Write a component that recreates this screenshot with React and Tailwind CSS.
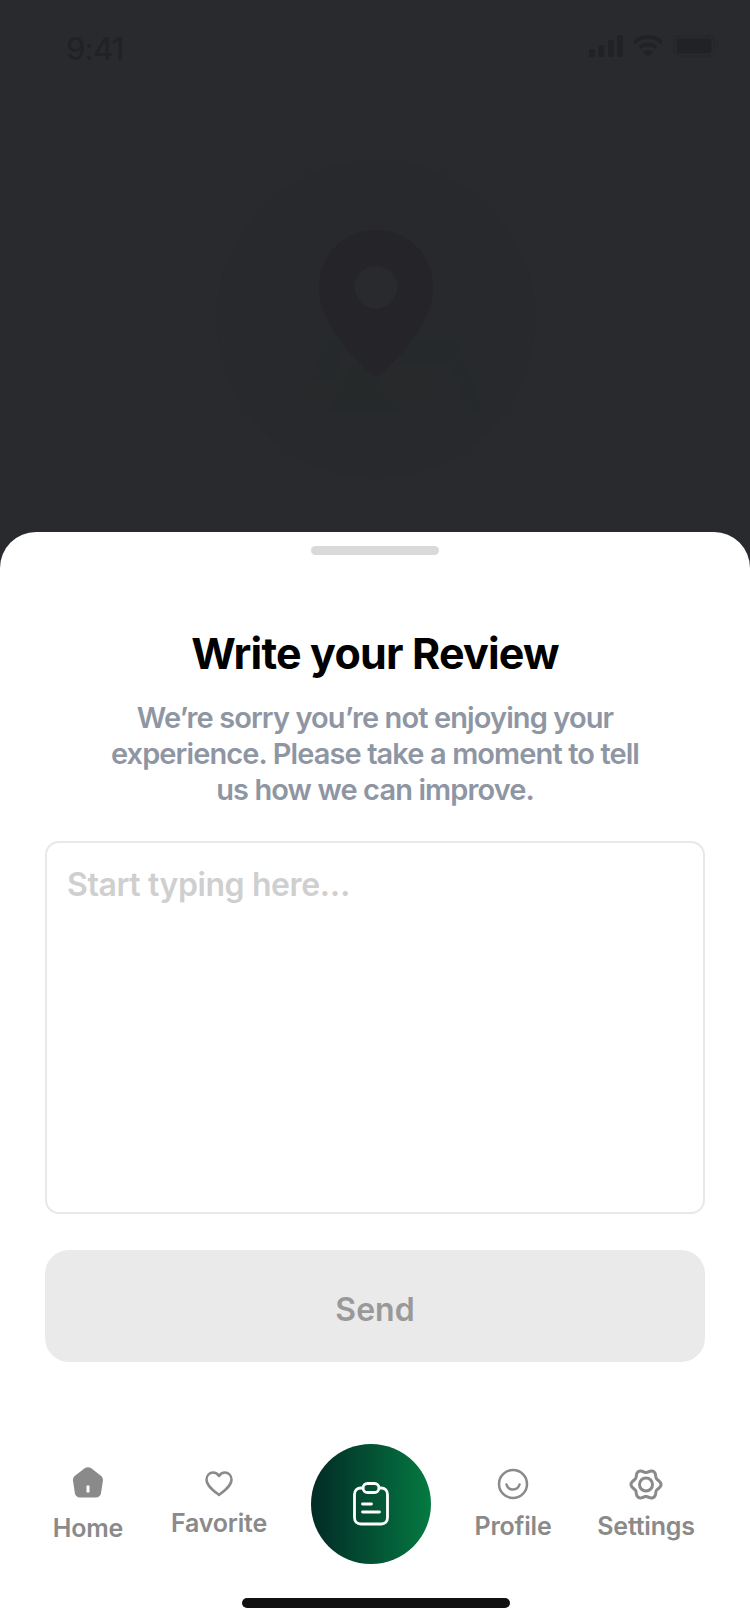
const sans = "font-['Inter','Noto_Sans',sans-serif]";

// gear outline: six soft lobes around the centre
const gearPath =
  Array.from({ length: 120 }, (_, i) => {
    const a = (i / 120) * Math.PI * 2;
    const r = 13.5 + 1.5 * Math.cos(6 * a);
    return `${i === 0 ? 'M' : 'L'}${(17 + r * Math.cos(a)).toFixed(2)} ${(16.5 + r * Math.sin(a)).toFixed(2)}`;
  }).join(' ') + ' Z';

function StatusBar() {
  return (
    <div className="flex items-start justify-between pl-[66px] pr-[31px] pt-[30px]">
      <span className={`${sans} text-[31px] leading-[38px] font-medium tracking-[-1px] text-[#212225]`}>9:41</span>
      <div className="flex items-center gap-[10px] pt-[5px]">
        <svg width="34" height="22" viewBox="0 0 34 22" fill="#212225">
          <rect x="0" y="14" width="6" height="8" rx="2" />
          <rect x="9.5" y="10" width="6" height="12" rx="2" />
          <rect x="19" y="5" width="6" height="17" rx="2" />
          <rect x="28" y="0" width="6" height="22" rx="2" />
        </svg>
        <svg width="30" height="22" viewBox="0 0 30 22" fill="#212225">
          <path d="M15 0C9.2 0 4 2.3 0 6l2.6 3C5.9 5.900 10.200 4 15 4s9.100 1.900 12.400 5L30 6C26 2.300 20.800 0 15 0z" />
          <path d="M15 7.500c-3.600 0-6.900 1.400-9.400 3.700l2.700 3c1.800-1.600 4.100-2.600 6.700-2.600s4.900 1 6.700 2.600l2.700-3C21.900 8.900 18.600 7.500 15 7.500z" />
          <path d="M15 15c-1.900 0-3.500.7-4.800 1.800L15 22l4.800-5.200C18.500 15.700 16.900 15 15 15z" />
        </svg>
        <svg width="46" height="22" viewBox="0 0 46 22" fill="none">
          <rect x="1" y="1" width="40" height="20" rx="5" stroke="#26272a" strokeWidth="2" />
          <rect x="3.500" y="3.500" width="35" height="15" rx="3" fill="#212225" />
          <rect x="43" y="8" width="2.500" height="6" rx="1" fill="#27282b" />
        </svg>
      </div>
    </div>
  );
}

function MapIllustration() {
  return (
    <svg width="318" height="318" viewBox="0 0 318 318" fill="none" className="mx-auto mt-[92px] translate-x-[1px]">
      <circle cx="159" cy="159" r="159" fill="#28292c" />
      <path d="M107 182 L82 250 L112 250 L135 182 Z" fill="#28292a" />
      <path d="M107 182 L94 218 L118 218 L127 182 Z" fill="#26292b" />
      <path d="M135 200 L112 250 L185 250 L159 218 Z" fill="#25292a" />
      <path d="M159 218 L185 250 L228 250 L212 190 L190 190 Z" fill="#28292a" />
      <path d="M190 182 L234 182 Q240 182 243 190 L248 205 L180 205 Z" fill="#26292b" />
      <path d="M234 182 Q240 182 243 190 L265 250 L250 250 L228 182 Z" fill="#25292c" />
      <path
        d="M159 70C127 70 102 95 102 127C102 165 140 203 159 218C178 203 216 165 216 127C216 95 191 70 159 70Z"
        fill="#252428"
      />
      <circle cx="159" cy="127" r="21.500" fill="#292a2d" />
    </svg>
  );
}

function HomeIcon() {
  return (
    <svg width="32" height="31" viewBox="0 0 32 31" fill="#8a8a8a">
      <path
        fillRule="evenodd"
        d="M12.700 1.300c1.900-1.500 4.700-1.500 6.600 0l9.600 7.400c1.500 1.200 2.300 3.100 2 5l-1.900 12.500c-.4 2.400-2.500 4.300-5 4.300H7.900c-2.500 0-4.600-1.900-5-4.300L1 13.700c-.3-1.900.5-3.800 2-5L12.700 1.300zM14.500 18.500v7h3v-7h-3z"
      />
    </svg>
  );
}

function HeartIcon() {
  return (
    <svg width="28" height="26" viewBox="0 0 28 26" fill="none" stroke="#8a8a8a" strokeWidth="2.500" strokeLinejoin="round">
      <path d="M14 24C9 20 1.500 15 1.500 8.500C1.500 4.500 4.500 1.500 8 1.500C10.500 1.500 12.700 2.800 14 5C15.300 2.800 17.500 1.500 20 1.500C23.500 1.500 26.500 4.500 26.500 8.500C26.500 15 19 20 14 24Z" />
    </svg>
  );
}

function SmileIcon() {
  return (
    <svg width="32" height="32" viewBox="0 0 32 32" fill="none" stroke="#8a8a8a" strokeWidth="2.500" strokeLinecap="round">
      <circle cx="16" cy="16" r="14" />
      <path d="M9.500 16.500C10.500 20 13 21.500 16 21.500C19 21.500 21.500 20 22.500 16.500" />
    </svg>
  );
}

function GearIcon() {
  return (
    <svg width="34" height="33" viewBox="0 0 34 33" fill="none" stroke="#8a8a8a" strokeWidth="3" strokeLinejoin="round">
      <path d={gearPath} />
      <circle cx="17" cy="16.500" r="6.500" />
    </svg>
  );
}

function ClipboardIcon() {
  return (
    <svg width="36" height="44" viewBox="0 0 36 44" fill="none" stroke="#fff" strokeWidth="2.800" strokeLinecap="round">
      <path d="M10 6H8C4 6 1.500 8.500 1.500 12.500V35.500C1.500 39.500 4 42 8 42H28C32 42 34.500 39.500 34.500 35.500V12.500C34.500 8.500 32 6 28 6H26" />
      <rect x="10" y="1.500" width="16" height="9" rx="4.500" />
      <path d="M9.500 22H18.500" />
      <path d="M9.500 30H26.500" />
    </svg>
  );
}

function NavItem({ icon, label, className }) {
  return (
    <div className={`flex flex-col items-center ${className}`}>
      <div className="h-[36px] flex items-center justify-center">{icon}</div>
      <span className="font-['Inter',sans-serif] text-[25px] leading-[30px] font-semibold tracking-[-0.2px] text-[#8a8a8a] whitespace-nowrap">{label}</span>
    </div>
  );
}

export default function App() {
  return (
    <div className="w-[750px] h-[1624px] flex flex-col bg-[#292a2d] overflow-hidden">
      <div className="h-[532px] flex-none">
        <StatusBar />
        <MapIllustration />
      </div>

      <div className="flex-1 flex flex-col items-center bg-white rounded-t-[36px] relative">
        <div className="w-[128px] h-[9px] mt-[14px] rounded-full bg-[#d9d9d9]" />
        <h1 className={`${sans} mt-[71px] text-[43px] leading-[54px] font-bold tracking-[-0.8px] text-black`}>Write your Review</h1>
        <p className={`${sans} mt-[20px] text-[29px] leading-[36px] font-semibold tracking-[-0.9px] text-[#8f96a3] text-center`}>
          We’re sorry you’re not enjoying your<br />
          experience. Please take a moment to tell<br />
          us how we can improve.
        </p>
        <div className={`${sans} w-[660px] h-[373px] mt-[33px] border-2 border-[#e8e8e8] rounded-[14px] px-[20px] pt-[22px] text-[32px] leading-[40px] font-semibold tracking-[-0.4px] text-[#cfcfcf]`}>
          Start typing here…
        </div>
        <button className="w-[660px] h-[112px] mt-[36px] pt-[8px] rounded-[24px] bg-[#eaeaea] font-['Inter',sans-serif] text-[32px] font-semibold text-[#999999]">
          Send
        </button>

        <div className="w-full h-[120px] mt-[82px] flex items-start">
          <NavItem icon={<HomeIcon />} label="Home" className="w-[70px] ml-[53px] mt-[20px] gap-[13px]" />
          <NavItem icon={<HeartIcon />} label="Favorite" className="w-[96px] ml-[48px] mt-[22px] gap-[6px]" />
          <div className="w-[120px] h-[120px] ml-[44px] flex-none rounded-full bg-gradient-to-r from-[#022b25] to-[#057a41] flex items-center justify-center">
            <ClipboardIcon />
          </div>
          <NavItem icon={<SmileIcon />} label="Profile" className="w-[76px] ml-[44px] mt-[22px] gap-[9px]" />
          <NavItem icon={<GearIcon />} label="Settings" className="w-[98px] ml-[46px] mt-[22px] gap-[9px]" />
        </div>

        <div className="w-[268px] h-[10px] mt-[34px] ml-[2px] rounded-full bg-[#111111]" />
      </div>
    </div>
  );
}
